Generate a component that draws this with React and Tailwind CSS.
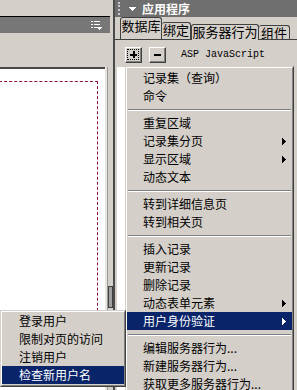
import React from "react";

const mainItems = [
  { label: "记录集（查询）" },
  { label: "命令" },
  { sep: true },
  { label: "重复区域" },
  { label: "记录集分页", arrow: true },
  { label: "显示区域", arrow: true },
  { label: "动态文本" },
  { sep: true },
  { label: "转到详细信息页" },
  { label: "转到相关页" },
  { sep: true },
  { label: "插入记录" },
  { label: "更新记录" },
  { label: "删除记录" },
  { label: "动态表单元素", arrow: true },
  { label: "用户身份验证", arrow: true, active: true },
  { sep: true },
  { label: "编辑服务器行为..." },
  { label: "新建服务器行为..." },
  { label: "获取更多服务器行为..." },
];

const authItems = [
  { label: "登录用户" },
  { label: "限制对页的访问" },
  { label: "注销用户" },
  { label: "检查新用户名", active: true },
];

function Arrow({ white }) {
  return (
    <svg width="4" height="7" viewBox="0 0 4 7" shapeRendering="crispEdges" className={white ? "fill-white" : "fill-black"}>
      <path d="M0 0h1v7H0zM1 1h1v5H1zM2 2h1v3H2zM3 3h1v1H3z" />
    </svg>
  );
}

function MenuItem({ item, wide }) {
  return (
    <div
      className={
        item.active
          ? "flex h-[18px] items-center bg-[#0a246a] pr-[6px] text-white"
          : "flex h-[18px] items-center pr-[6px] text-black"
      }
    >
      <span className={wide ? "flex-1 pl-[17px] text-[12px] leading-[18px]" : "flex-1 pl-[16px] text-[12px] leading-[18px]"}>
        {item.label}
      </span>
      {item.arrow && <Arrow white={item.active} />}
    </div>
  );
}

function Separator() {
  return (
    <div className="h-[9px] px-[1px] pt-[4px]">
      <div className="border-t border-b border-t-[#808080] border-b-white" />
    </div>
  );
}

function MenuFrame({ className, children }) {
  return (
    <div className={className}>
      <div className="border border-t-white border-l-white border-r-[#808080] border-b-[#808080]">{children}</div>
    </div>
  );
}

function ListIcon() {
  return (
    <svg width="11" height="10" viewBox="0 0 11 10" shapeRendering="crispEdges" className="fill-white">
      <path d="M0 1h2v1H0zM3 1h6v1H3zM0 4h2v1H0zM3 4h6v1H3zM0 7h2v1H0zM3 7h3v1H3zM6 7h5v1H6zM7 8h3v1H7zM8 9h1v1H8z" />
    </svg>
  );
}

function Tab({ label, className }) {
  return <div className={className}>{label}</div>;
}

function PanelButton({ children, focused }) {
  return (
    <div className="h-[16px] w-[17px] border border-t-white border-l-white border-r-[#404040] border-b-[#404040] bg-[#d4cfc9]">
      <div className="flex h-full w-full items-center justify-center border-r border-b border-[#808080]">
        <div
          className={
            focused
              ? "flex h-[11px] w-[12px] items-center justify-center border border-dotted border-black"
              : "flex h-[11px] w-[12px] items-center justify-center"
          }
        >
          {children}
        </div>
      </div>
    </div>
  );
}

function PlusGlyph() {
  return (
    <svg width="7" height="7" viewBox="0 0 7 7" shapeRendering="crispEdges" className="fill-black">
      <path d="M3 0h2v7H3zM0 3h7v2H0z" />
    </svg>
  );
}

function MinusGlyph() {
  return (
    <svg width="7" height="2" viewBox="0 0 7 2" shapeRendering="crispEdges" className="fill-black">
      <path d="M0 0h7v2H0z" />
    </svg>
  );
}

export default function App() {
  return (
    <div className="relative flex h-[390px] w-[297px] overflow-hidden bg-[#d4cfc9] font-['Noto_Sans_CJK_SC','Noto_Sans',sans-serif]">
      {/* left document panel */}
      <div className="flex w-[113px] shrink-0 flex-col">
        <div className="h-[16px]" />
        <div className="mr-[3px] flex h-[17px] items-center justify-end border-t border-black bg-[#777777] pr-[8px]">
          <ListIcon />
        </div>
        <div className="h-[34px]" />
        <div className="flex flex-1">
          <div className="w-[105px] border-t-2 border-[#4a4a4a] bg-white pt-[12px] pr-[7px]">
            <div className="-ml-px h-[260px] border border-dashed border-[#8a0f45]" />
          </div>
          <div className="w-[3px] border-r border-[#9a9a9a] bg-[#e8e4e0]" />
          <div className="flex-1 pt-[219px]">
            <div className="h-[22px] w-[5px] border border-[#404040] bg-[#a0a0a0]" />
          </div>
        </div>
      </div>

      {/* right panel: 应用程序 */}
      <div className="flex flex-1 flex-col border-l-2 border-[#4a4a4a]">
        <div className="flex h-[17px] items-center bg-[#6e6e6e]">
          <div className="ml-[3px] h-[13px] w-[3px] border-l-2 border-dotted border-[#c8c8c8]" />
          <svg width="7" height="4" viewBox="0 0 7 4" shapeRendering="crispEdges" className="ml-[8px] fill-white">
            <path d="M0 0h7v1H0zM1 1h5v1H1zM2 2h3v1H2zM3 3h1v1H3z" />
          </svg>
          <span className="ml-[6px] text-[12px] leading-none font-bold text-white">应用程序</span>
        </div>

        <div className="flex h-[22px] items-end pl-[5px] text-[13px] text-black">
          <Tab label="数据库" className="h-[22px] w-[42px] rounded-t-[3px] border border-b-0 border-[#404040] pt-[1px] text-center leading-[14px]" />
          <Tab label="绑定" className="h-[17px] w-[29px] rounded-t-[3px] border border-b-0 border-l-0 border-[#404040] text-center leading-[14px]" />
          <Tab label="服务器行为" className="relative z-10 -mb-px h-[16px] w-[68px] rounded-t-[3px] border border-b-0 border-[#404040] bg-[#d4cfc9] text-center leading-[14px]" />
          <Tab label="组件" className="h-[14px] w-[31px] rounded-t-[3px] border border-b-0 border-l-0 border-[#404040] text-center leading-[13px]" />
        </div>

        <div className="flex flex-1 flex-col border-t border-[#404040] pt-[7px]">
          <div className="flex h-[16px] items-center pl-[10px]">
            <PanelButton focused>
              <PlusGlyph />
            </PanelButton>
            <div className="ml-[7px]">
              <PanelButton>
                <MinusGlyph />
              </PanelButton>
            </div>
            <span className="ml-[15px] font-['Liberation_Mono',monospace] text-[10px] leading-none text-black">ASP JavaScript</span>
          </div>
          <div className="mt-[4px] ml-[2px] mr-[3px] flex-1 border-r border-[#404040] bg-white" />
        </div>
      </div>

      {/* server behaviour menu */}
      <MenuFrame className="absolute top-[66px] left-[125px] w-[169px] border border-t-[#d4cfc9] border-l-[#d4cfc9] border-r-[#404040] border-b-[#404040] bg-[#d4cfc9]">
        <div className="pt-[1px]">
          {mainItems.map((item, i) => (item.sep ? <Separator key={i} /> : <MenuItem key={i} item={item} />))}
        </div>
      </MenuFrame>

      {/* user authentication submenu */}
      <MenuFrame className="absolute top-[310px] left-0 w-[126px] border border-t-[#d4cfc9] border-l-[#d4cfc9] border-r-[#404040] border-b-[#404040] bg-[#d4cfc9]">
        <div className="pb-[1px]">
          {authItems.map((item, i) => (
            <MenuItem key={i} item={item} wide />
          ))}
        </div>
      </MenuFrame>
    </div>
  );
}
